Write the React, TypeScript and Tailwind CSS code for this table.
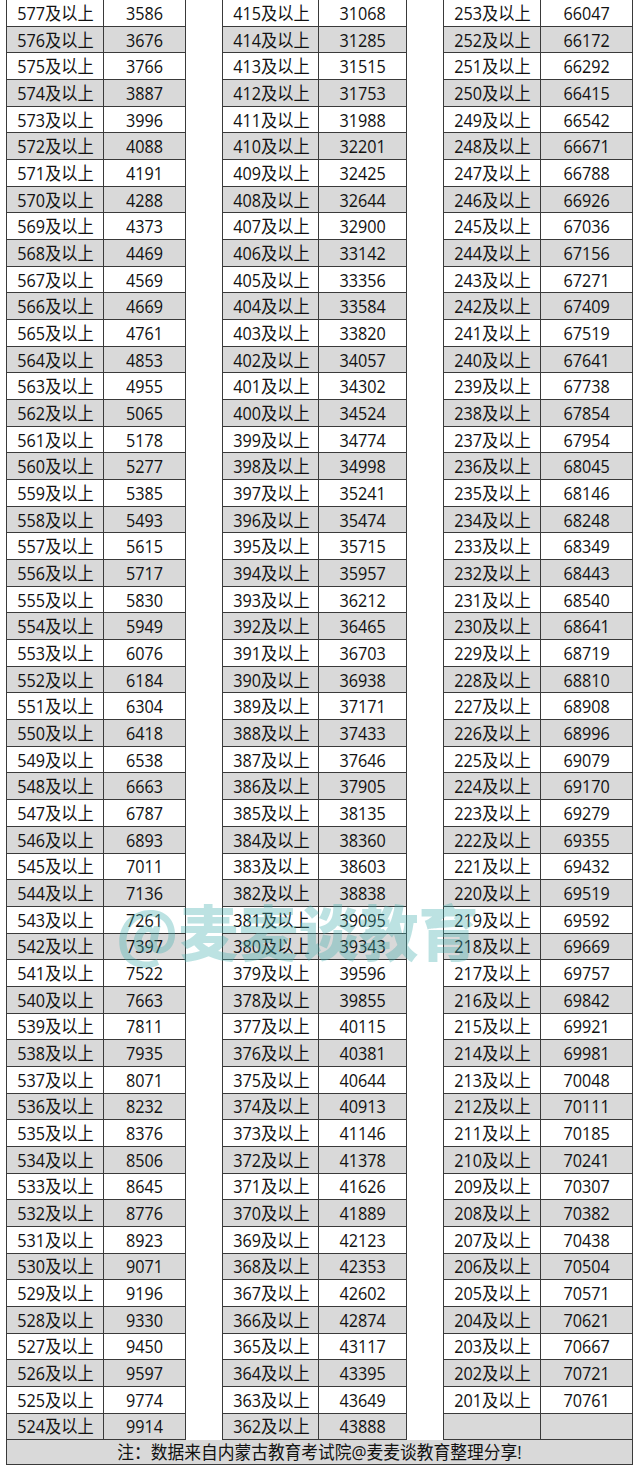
import React from "react";

const t1: [string, string][] = [
  ["577", "3586"], ["576", "3676"], ["575", "3766"], ["574", "3887"], ["573", "3996"], ["572", "4088"],
  ["571", "4191"], ["570", "4288"], ["569", "4373"], ["568", "4469"], ["567", "4569"], ["566", "4669"],
  ["565", "4761"], ["564", "4853"], ["563", "4955"], ["562", "5065"], ["561", "5178"], ["560", "5277"],
  ["559", "5385"], ["558", "5493"], ["557", "5615"], ["556", "5717"], ["555", "5830"], ["554", "5949"],
  ["553", "6076"], ["552", "6184"], ["551", "6304"], ["550", "6418"], ["549", "6538"], ["548", "6663"],
  ["547", "6787"], ["546", "6893"], ["545", "7011"], ["544", "7136"], ["543", "7261"], ["542", "7397"],
  ["541", "7522"], ["540", "7663"], ["539", "7811"], ["538", "7935"], ["537", "8071"], ["536", "8232"],
  ["535", "8376"], ["534", "8506"], ["533", "8645"], ["532", "8776"], ["531", "8923"], ["530", "9071"],
  ["529", "9196"], ["528", "9330"], ["527", "9450"], ["526", "9597"], ["525", "9774"], ["524", "9914"],
];

const t2: [string, string][] = [
  ["415", "31068"], ["414", "31285"], ["413", "31515"], ["412", "31753"], ["411", "31988"], ["410", "32201"],
  ["409", "32425"], ["408", "32644"], ["407", "32900"], ["406", "33142"], ["405", "33356"], ["404", "33584"],
  ["403", "33820"], ["402", "34057"], ["401", "34302"], ["400", "34524"], ["399", "34774"], ["398", "34998"],
  ["397", "35241"], ["396", "35474"], ["395", "35715"], ["394", "35957"], ["393", "36212"], ["392", "36465"],
  ["391", "36703"], ["390", "36938"], ["389", "37171"], ["388", "37433"], ["387", "37646"], ["386", "37905"],
  ["385", "38135"], ["384", "38360"], ["383", "38603"], ["382", "38838"], ["381", "39095"], ["380", "39343"],
  ["379", "39596"], ["378", "39855"], ["377", "40115"], ["376", "40381"], ["375", "40644"], ["374", "40913"],
  ["373", "41146"], ["372", "41378"], ["371", "41626"], ["370", "41889"], ["369", "42123"], ["368", "42353"],
  ["367", "42602"], ["366", "42874"], ["365", "43117"], ["364", "43395"], ["363", "43649"], ["362", "43888"],
];

const t3: [string, string][] = [
  ["253", "66047"], ["252", "66172"], ["251", "66292"], ["250", "66415"], ["249", "66542"], ["248", "66671"],
  ["247", "66788"], ["246", "66926"], ["245", "67036"], ["244", "67156"], ["243", "67271"], ["242", "67409"],
  ["241", "67519"], ["240", "67641"], ["239", "67738"], ["238", "67854"], ["237", "67954"], ["236", "68045"],
  ["235", "68146"], ["234", "68248"], ["233", "68349"], ["232", "68443"], ["231", "68540"], ["230", "68641"],
  ["229", "68719"], ["228", "68810"], ["227", "68908"], ["226", "68996"], ["225", "69079"], ["224", "69170"],
  ["223", "69279"], ["222", "69355"], ["221", "69432"], ["220", "69519"], ["219", "69592"], ["218", "69669"],
  ["217", "69757"], ["216", "69842"], ["215", "69921"], ["214", "69981"], ["213", "70048"], ["212", "70111"],
  ["211", "70185"], ["210", "70241"], ["209", "70307"], ["208", "70382"], ["207", "70438"], ["206", "70504"],
  ["205", "70571"], ["204", "70621"], ["203", "70667"], ["202", "70721"], ["201", "70761"], ["", ""],
];

function Table({ rows, w1, w2 }: { rows: [string, string][]; w1: string; w2: string }) {
  return (
    <div className="flex flex-col border-l border-[#3a3a3a]">
      {rows.map((r, i) => (
        <div
          key={i}
          className={`flex h-[26.68px] border-b border-[#3a3a3a] ${i % 2 === 1 ? "bg-[#d9d9d9]" : "bg-white"}`}
        >
          <div className={`${w1} flex items-center justify-center border-r border-[#3a3a3a]`}>
            {r[0] && <span className="inline-block scale-x-[0.9] whitespace-nowrap">{r[0]}及以上</span>}
          </div>
          <div className={`${w2} flex items-center justify-center border-r border-[#3a3a3a]`}>
            {r[1] && <span className="inline-block scale-x-[0.9]">{r[1]}</span>}
          </div>
        </div>
      ))}
    </div>
  );
}

export default function App() {
  return (
    <div
      className="relative w-[640px] h-[1474px] bg-white text-[18px] leading-none text-[#111]"
      style={{ fontFamily: '"Open Sans", "Noto Sans CJK SC", sans-serif' }}
    >
      <div className="pl-[6px] w-[633px]">
        <div className="flex">
          <Table rows={t1} w1="w-[97px]" w2="w-[82px]" />
          <div className="w-[38px]" />
          <Table rows={t2} w1="w-[96px]" w2="w-[88px]" />
          <div className="w-[37px]" />
          <Table rows={t3} w1="w-[97px]" w2="w-[92px]" />
        </div>
        <div className="h-[25px] flex items-center justify-center bg-[#d9d9d9] border-l border-r border-b border-[#3a3a3a]">
          <span className="inline-block scale-x-[0.93] whitespace-nowrap">注：数据来自内蒙古教育考试院@麦麦谈教育整理分享!</span>
        </div>
      </div>
      <div
        className="absolute left-[116px] top-[900px] pointer-events-none text-[60px] leading-none font-black text-[rgba(70,175,175,0.36)]"
        style={{ fontFamily: '"Noto Sans CJK SC", sans-serif' }}
      >
        @麦麦谈教育
      </div>
    </div>
  );
}
